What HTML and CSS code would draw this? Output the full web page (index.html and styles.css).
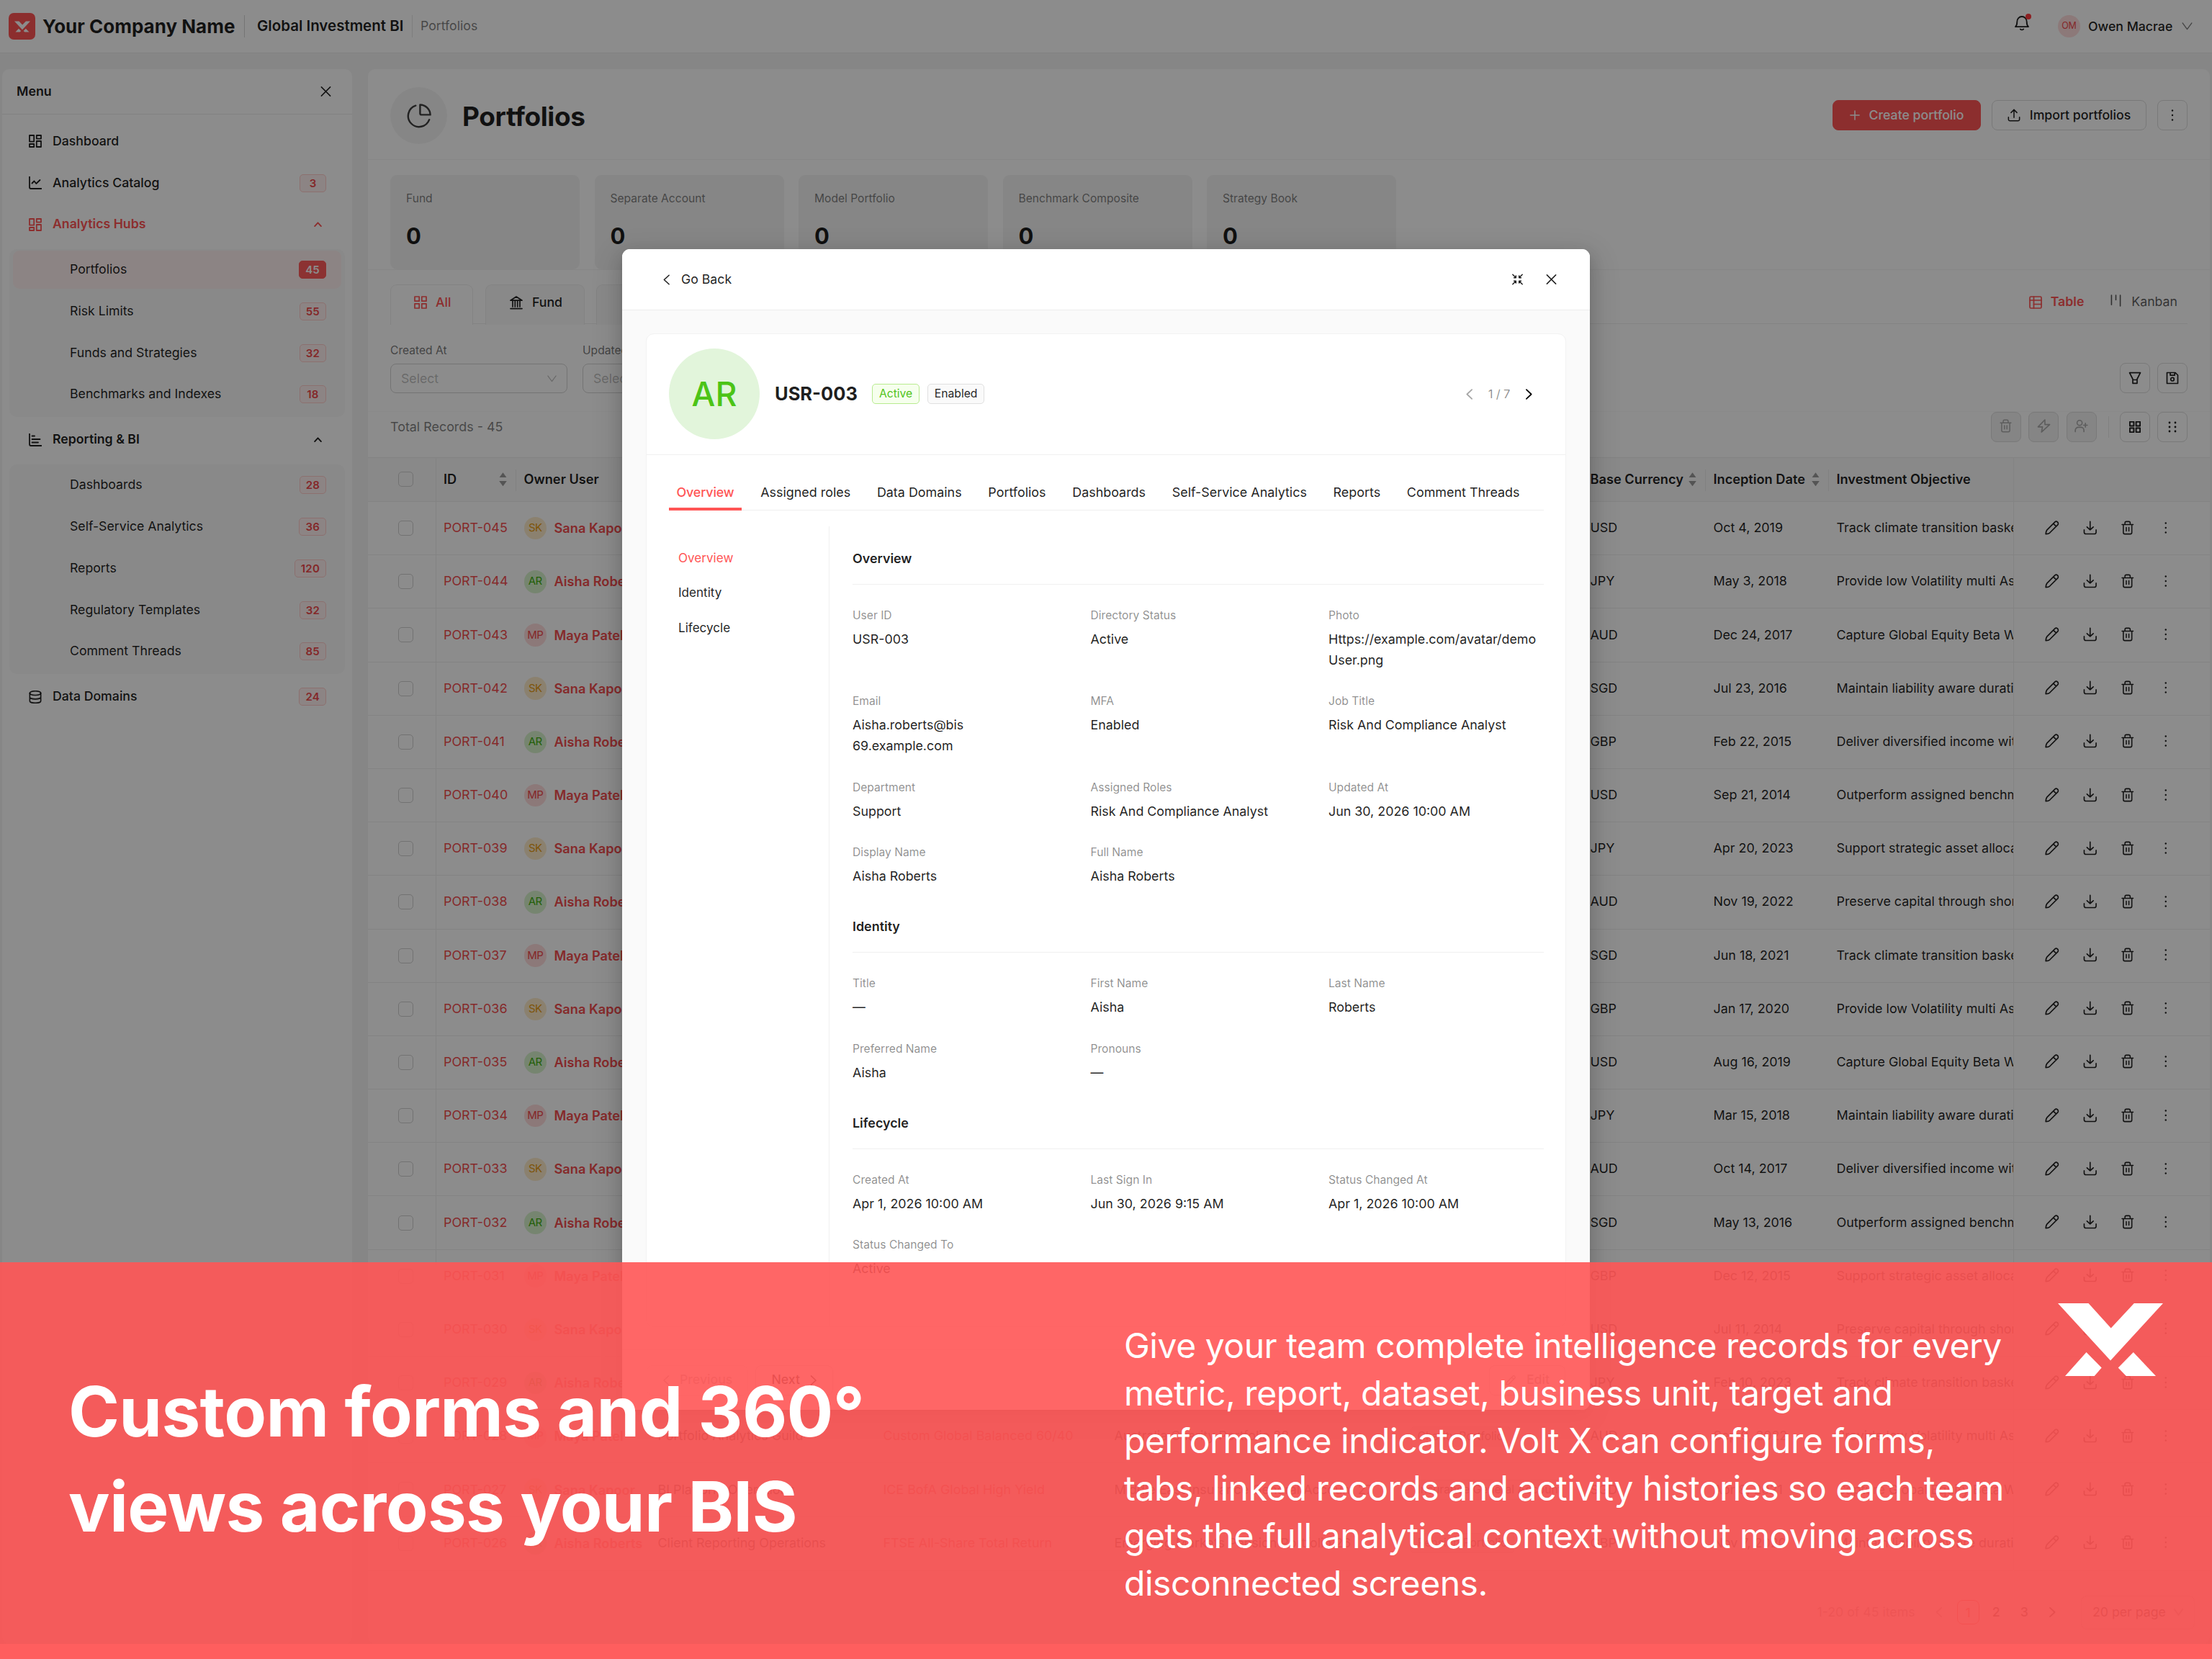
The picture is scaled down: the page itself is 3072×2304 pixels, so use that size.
FILE: index.html
```html
<!DOCTYPE html>
<html lang="en">
<head>
<meta charset="utf-8">
<title>Portfolios</title>
<link rel="stylesheet" href="styles.css">
</head>
<body>
<svg class="defs" aria-hidden="true">
  <symbol id="i-dash" viewBox="0 0 18 18"><path d="M1 1h6.200v8.600H1zM10.800 1H17v4.600H10.800zM1 13h6.200v4H1zM10.800 9H17v8H10.800z"/></symbol>
  <symbol id="i-line" viewBox="0 0 18 18"><path d="M1 .5v14.500a2 2 0 0 0 2 2h14.500M4.500 9.500 7.500 6.500l2.800 3.500 5.200-5"/></symbol>
  <symbol id="i-bars" viewBox="0 0 18 18"><path d="M1 .5v14.500a2 2 0 0 0 2 2h14.500M4.500 3.500h3.500M4.500 8h11M4.500 12.500h8.500"/></symbol>
  <symbol id="i-db" viewBox="0 0 18 20"><ellipse cx="9" cy="4" rx="8.500" ry="3.200"/><path d="M.5 4v12c0 1.800 3.800 3.200 8.500 3.200s8.500-1.400 8.500-3.200V4M.5 10c0 1.800 3.800 3.200 8.500 3.200s8.500-1.400 8.500-3.200"/></symbol>
  <symbol id="i-x" viewBox="0 0 16 16"><path d="m1 1 14 14M15 1 1 15"/></symbol>
  <symbol id="i-grid" viewBox="0 0 18 18"><path d="M1 1h6.200v6.200H1zM10.800 1H17v6.200h-6.200zM1 10.800h6.200V17H1zM10.800 10.800H17V17h-6.200z"/></symbol>
  <symbol id="i-bank" viewBox="0 0 20 20"><path d="M2 7.200 10 2l8 5.200zM2 18.600h16M5 8v8M8.300 8v8M11.700 8v8M15 8v8"/></symbol>
  <symbol id="i-down" viewBox="0 0 16 12"><path d="m1 1 7 9.500L15 1"/></symbol>
  <symbol id="i-up" viewBox="0 0 12 8"><path d="m1 7 5-5.500L11 7"/></symbol>
  <symbol id="i-left" viewBox="0 0 10 16"><path d="M9 1 1.500 8 9 15"/></symbol>
  <symbol id="i-right" viewBox="0 0 10 16"><path d="m1 1 7.500 7L1 15"/></symbol>
  <symbol id="i-pencil" viewBox="0 0 20 20"><path d="M1.200 18.800c.2-2.700.6-4.400 1.600-5.600L14 2a2.800 2.800 0 0 1 4 4L6.800 17.200c-1.200 1-2.900 1.400-5.600 1.600zM12.200 4.200l3.600 3.600"/></symbol>
  <symbol id="i-load" viewBox="0 0 20 20"><path d="M10 1v12M5.500 8.800 10 13l4.500-4.200M1.500 13v3.500A2.200 2.200 0 0 0 3.700 18.700h12.600a2.200 2.200 0 0 0 2.200-2.200V13"/></symbol>
  <symbol id="i-send" viewBox="0 0 20 20"><path d="M10 13.500V1.500M5.500 6 10 1.500 14.500 6M1.500 13v3.500A2.200 2.200 0 0 0 3.700 18.700h12.600a2.200 2.200 0 0 0 2.200-2.200V13"/></symbol>
  <symbol id="i-trash" viewBox="0 0 20 22"><path d="M1.500 6h17M6 6V3.500A2 2 0 0 1 8 1.500h4a2 2 0 0 1 2 2V6M3.500 6v12.200A2.300 2.300 0 0 0 5.800 20.500h8.400a2.300 2.300 0 0 0 2.300-2.300V6M8 10.500v5.500M12 10.500v5.500"/></symbol>
  <symbol id="i-dots" viewBox="0 0 4 18"><g class="solid"><circle cx="2" cy="2.500" r="1.200"/><circle cx="2" cy="9" r="1.200"/><circle cx="2" cy="15.500" r="1.200"/></g></symbol>
  <symbol id="i-dots6" viewBox="0 0 12 18"><g class="solid"><circle cx="2" cy="3" r="1.400"/><circle cx="2" cy="9" r="1.400"/><circle cx="2" cy="15" r="1.400"/><circle cx="10" cy="3" r="1.400"/><circle cx="10" cy="9" r="1.400"/><circle cx="10" cy="15" r="1.400"/></g></symbol>
  <symbol id="i-filter" viewBox="0 0 18 18"><path d="M1.500 1.700h15L12 10.500V16.300H6V10.500zM6 11.500h6"/></symbol>
  <symbol id="i-save" viewBox="0 0 18 18"><path d="M1.500 1.500h11.500l3.500 3.500v11.500h-15zM6 1.500v3.600h6.200V1.500"/><circle cx="9" cy="10.700" r="2.300"/></symbol>
  <symbol id="i-bolt" viewBox="0 0 20 20"><path d="M11.500 1 1.500 11.500h6.500L6.500 19 18.500 8h-7z"/></symbol>
  <symbol id="i-useradd" viewBox="0 0 20 20"><circle cx="7.500" cy="5.500" r="3.700"/><path d="M1.200 18.500v-2a4.500 4.500 0 0 1 4.500-4.500h3.600a4.500 4.500 0 0 1 4.500 4.500v2M16 6.200v5.600M13.200 9h5.600"/></symbol>
  <symbol id="i-table" viewBox="0 0 18 18"><rect x="1" y="1" width="16" height="16" rx="1.500"/><path d="M1 6h16M6.500 1v16"/><path d="M6.500 11.500h10.500"/></symbol>
  <symbol id="i-kanban" viewBox="0 0 16 18"><path d="M1.500 1v14M8 1v7M14.500 1v16"/></symbol>
  <symbol id="i-bell" viewBox="0 0 22 24"><path d="M2 17.200c1.600-1.500 2.300-3.200 2.300-7 0-4 2.800-7.200 6.700-7.200s6.700 3.200 6.700 7.200c0 3.800.7 5.500 2.300 7zM8.800 20.500c1 1.200 3.400 1.200 4.400 0"/></symbol>
  <symbol id="i-pie" viewBox="0 0 36 36"><path d="M13 2.800A16 16 0 1 0 33 23.500"/><path d="M19.500 1.500v12.800a2 2 0 0 0 2 2h13A15.200 15.200 0 0 0 19.500 1.500z"/></symbol>
  <symbol id="i-shrink" viewBox="0 0 18 18"><path d="M1.500 1.500 6.500 6.500M3.500 6.500h3v-3M16.500 1.500l-5 5M14.500 6.500h-3v-3M1.500 16.500l5-5M3.500 11.500h3v3M16.500 16.500l-5-5M14.500 11.500h-3v3"/></symbol>
  <symbol id="i-plus" viewBox="0 0 16 16"><path d="M8 1v14M1 8h14"/></symbol>
  <symbol id="i-brand" viewBox="0 0 146 101"><g class="solid"><path d="M0 0h42.500l31.200 34.500L105.800 0H146L73 79.500z"/><path d="M39.500 68 60.700 89.500 50.700 101H10z"/><path d="M104.800 68 136 101H94.800L83.700 89.500z"/></g></symbol>
</svg>

<div class="app">
  <header class="topbar">
    <span class="logo"><svg class="ic"><use href="#i-brand"/></svg></span>
    <span class="company">Your Company Name</span>
    <i class="bar"></i>
    <span class="product">Global Investment BI</span>
    <i class="bar thin"></i>
    <span class="crumb">Portfolios</span>
    <span class="bell"><svg class="ic"><use href="#i-bell"/></svg></span>
    <span class="avatar mp me">OM</span>
    <span class="user">Owen Macrae</span>
    <svg class="ic user-caret"><use href="#i-down"/></svg>
  </header>

  <div class="columns">
    <nav class="sidebar">
      <div class="side-head"><b>Menu</b><svg class="ic"><use href="#i-x"/></svg></div>
      <div class="menu">
        <div class="item"><svg class="ic"><use href="#i-dash"/></svg>Dashboard</div>
        <div class="item"><svg class="ic"><use href="#i-line"/></svg>Analytics Catalog<em>3</em></div>
        <div class="item open red"><svg class="ic"><use href="#i-dash"/></svg>Analytics Hubs<svg class="ic caret"><use href="#i-up"/></svg></div>
        <div class="sub">
          <div class="item active">Portfolios<em>45</em></div>
          <div class="item">Risk Limits<em>55</em></div>
          <div class="item">Funds and Strategies<em>32</em></div>
          <div class="item">Benchmarks and Indexes<em>18</em></div>
        </div>
        <div class="item open"><svg class="ic"><use href="#i-bars"/></svg>Reporting &amp; BI<svg class="ic caret"><use href="#i-up"/></svg></div>
        <div class="sub">
          <div class="item">Dashboards<em>28</em></div>
          <div class="item">Self-Service Analytics<em>36</em></div>
          <div class="item">Reports<em>120</em></div>
          <div class="item">Regulatory Templates<em>32</em></div>
          <div class="item">Comment Threads<em>85</em></div>
        </div>
        <div class="item"><svg class="ic"><use href="#i-db"/></svg>Data Domains<em>24</em></div>
      </div>
    </nav>

    <main class="panel">
      <div class="page-head">
        <span class="page-icon"><svg class="ic"><use href="#i-pie"/></svg></span>
        <h1>Portfolios</h1>
        <span class="btn primary"><svg class="ic"><use href="#i-plus"/></svg>Create portfolio</span>
        <span class="btn import"><svg class="ic"><use href="#i-send"/></svg>Import portfolios</span>
        <span class="btn square"><svg class="ic dots"><use href="#i-dots"/></svg></span>
      </div>
      <div class="stats">
        <div class="stat"><span>Fund</span><b>0</b></div>
        <div class="stat"><span>Separate Account</span><b>0</b></div>
        <div class="stat"><span>Model Portfolio</span><b>0</b></div>
        <div class="stat"><span>Benchmark Composite</span><b>0</b></div>
        <div class="stat"><span>Strategy Book</span><b>0</b></div>
      </div>
      <div class="tabs">
        <div class="tab on"><svg class="ic"><use href="#i-grid"/></svg>All</div>
        <div class="tab"><svg class="ic bank"><use href="#i-bank"/></svg>Fund</div>
        <div class="tab cut"></div>
        <div class="views"><span class="red"><svg class="ic"><use href="#i-table"/></svg>Table</span><span class="kanban"><svg class="ic"><use href="#i-kanban"/></svg>Kanban</span></div>
      </div>
      <div class="filters">
        <label>Created At<span class="select">Select<svg class="ic"><use href="#i-down"/></svg></span></label>
        <label>Updated At<span class="select">Select<svg class="ic"><use href="#i-down"/></svg></span></label>
        <span class="btn square push"><svg class="ic"><use href="#i-filter"/></svg></span>
        <span class="btn square"><svg class="ic"><use href="#i-save"/></svg></span>
      </div>
      <div class="records">
        <span>Total Records - 45</span>
        <span class="btn square off push"><svg class="ic tall"><use href="#i-trash"/></svg></span>
        <span class="btn square off"><svg class="ic"><use href="#i-bolt"/></svg></span>
        <span class="btn square off"><svg class="ic"><use href="#i-useradd"/></svg></span>
        <i></i>
        <span class="btn square"><svg class="ic small"><use href="#i-grid"/></svg></span>
        <span class="btn square"><svg class="ic six"><use href="#i-dots6"/></svg></span>
      </div>
      <div class="table" id="table">
        <div class="row head">
          <div class="check"><i></i></div>
          <div>ID<s></s></div><div>Owner User</div><div>Team</div><div>Benchmark</div><div>Name</div><div>Type</div>
          <div>Base Currency<s></s></div><div>Inception Date<s></s></div><div>Investment Objective</div><div class="acts"></div>
        </div>
      </div>
      <div class="pager">
        <span class="count">1-20 of 45 items</span>
        <svg class="ic faint"><use href="#i-left"/></svg>
        <span class="num on">1</span><span class="num">2</span><span class="num">3</span>
        <svg class="ic"><use href="#i-right"/></svg>
        <span class="size">20 per page<svg class="ic"><use href="#i-down"/></svg></span>
      </div>
    </main>
  </div>
</div>

<div class="mask"></div>

<section class="modal">
  <div class="modal-head">
    <svg class="ic back"><use href="#i-left"/></svg><span>Go Back</span>
    <svg class="ic shrink"><use href="#i-shrink"/></svg><svg class="ic close"><use href="#i-x"/></svg>
  </div>
  <div class="modal-body">
    <div class="card">
      <div class="who">
        <span class="big">AR</span>
        <h2>USR-003</h2>
        <span class="tag ok">Active</span><span class="tag">Enabled</span>
        <div class="step"><svg class="ic faint"><use href="#i-left"/></svg><span>1 / 7</span><svg class="ic"><use href="#i-right"/></svg></div>
      </div>
      <div class="card-tabs">
        <span class="on">Overview</span><span>Assigned roles</span><span>Data Domains</span><span>Portfolios</span><span>Dashboards</span><span>Self-Service Analytics</span><span>Reports</span><span>Comment Threads</span>
      </div>
      <div class="detail">
        <div class="anchors"><span class="red">Overview</span><span>Identity</span><span>Lifecycle</span></div>
        <div class="sections">
          <h3>Overview</h3>
          <dl>
            <div><dt>User ID</dt><dd>USR-003</dd></div>
            <div><dt>Directory Status</dt><dd>Active</dd></div>
            <div><dt>Photo</dt><dd>Https://example.com/avatar/demo<br>User.png</dd></div>
            <div><dt>Email</dt><dd>Aisha.roberts@bis<br>69.example.com</dd></div>
            <div><dt>MFA</dt><dd>Enabled</dd></div>
            <div><dt>Job Title</dt><dd>Risk And Compliance Analyst</dd></div>
            <div><dt>Department</dt><dd>Support</dd></div>
            <div><dt>Assigned Roles</dt><dd>Risk And Compliance Analyst</dd></div>
            <div><dt>Updated At</dt><dd>Jun 30, 2026 10:00 AM</dd></div>
            <div><dt>Display Name</dt><dd>Aisha Roberts</dd></div>
            <div><dt>Full Name</dt><dd>Aisha Roberts</dd></div>
          </dl>
          <h3>Identity</h3>
          <dl>
            <div><dt>Title</dt><dd>—</dd></div>
            <div><dt>First Name</dt><dd>Aisha</dd></div>
            <div><dt>Last Name</dt><dd>Roberts</dd></div>
            <div><dt>Preferred Name</dt><dd>Aisha</dd></div>
            <div><dt>Pronouns</dt><dd>—</dd></div>
          </dl>
          <h3>Lifecycle</h3>
          <dl>
            <div><dt>Created At</dt><dd>Apr 1, 2026 10:00 AM</dd></div>
            <div><dt>Last Sign In</dt><dd>Jun 30, 2026 9:15 AM</dd></div>
            <div><dt>Status Changed At</dt><dd>Apr 1, 2026 10:00 AM</dd></div>
            <div><dt>Status Changed To</dt><dd>Active</dd></div>
          </dl>
        </div>
      </div>
    </div>
  </div>
  <div class="modal-foot">
    <span class="btn faint"><svg class="ic"><use href="#i-left"/></svg>Previous</span>
    <span class="btn">Next<svg class="ic"><use href="#i-right"/></svg></span>
    <span class="btn push edit"><svg class="ic"><use href="#i-pencil"/></svg>Edit</span>
  </div>
</section>

<section class="banner">
  <h4>Custom forms and 360°<br>views across your BIS</h4>
  <p>Give your team complete intelligence records for every<br>metric, report, dataset, business unit, target and<br>performance indicator. Volt X can configure forms,<br>tabs, linked records and activity histories so each team<br>gets the full analytical context without moving across<br>disconnected screens.</p>
  <svg class="ic"><use href="#i-brand"/></svg>
</section>
<script src="rows.js"></script>
</body>
</html>
```
FILE: styles.css
```css
* { box-sizing: border-box; }
body { margin: 0; width: 3072px; height: 2304px; overflow: hidden; position: relative; font: 400 17.7px/28.9px Inter, sans-serif; color: rgba(0,0,0,.88); background: #ffb0ae; }
h1, h2, h3, h4, p, dl, dd { margin: 0; }
.defs { position: absolute; width: 0; height: 0; }
.ic { display: block; flex: none; width: 18px; height: 18px; fill: none; stroke: currentColor; stroke-width: 1.7; stroke-linecap: round; stroke-linejoin: round; overflow: visible; }
.solid { fill: currentColor; stroke: none; }
.red { color: #ff5555; }
.push { margin-left: auto; }

.app { height: 2283px; background: #f5f5f5; }
.topbar { height: 74px; background: #fff; border-bottom: 1px solid #ececec; display: flex; align-items: center; padding: 0 27px 0 12px; }
.logo { width: 37px; height: 37px; border-radius: 7px; background: #ff5555; color: #fff; display: flex; align-items: center; justify-content: center; margin-right: 10px; }
.logo .ic { width: 22px; height: 16px; }
.company { font-size: 26px; font-weight: 650; width: 280px; white-space: nowrap; padding-top: 1px; }
.bar { width: 1px; height: 31px; background: #d5d5d5; margin-right: 17px; }
.bar.thin { margin-right: 11px; background: #e4e4e4; }
.product { font-size: 20.500px; font-weight: 620; width: 215px; white-space: nowrap; }
.crumb { color: rgba(0,0,0,.5); }
.bell { margin-left: auto; position: relative; margin-top: -9px; }
.bell .ic { width: 22px; height: 24px; stroke-width: 1.8; }
.bell::after { content: ""; position: absolute; right: -2px; top: -1px; width: 8px; height: 8px; border-radius: 50%; background: #ff3b3f; }
.avatar { width: 31.5px; height: 31.5px; border-radius: 50%; display: inline-flex; align-items: center; justify-content: center; font-size: 15px; flex: none; letter-spacing: -.5px; }
.me { margin: 0 11px 0 39px; font-size: 12.5px; letter-spacing: -.3px; }
.user { font-weight: 500; width: 130px; padding-top: 1px; }
.user-caret { width: 15px; height: 11px; opacity: .6; stroke-width: 1.4; }
.sk { background: #fdeccb; color: #e79a10; }
.ar { background: #d8f2cc; color: #3fae12; }
.mp { background: #ffdcdc; color: #f0484b; }

.columns { display: flex; gap: 22px; padding: 22px 3px 0; height: 2209px; }
.sidebar { width: 486px; background: #fff; border-radius: 10px; }
.side-head { height: 63px; border-bottom: 1px solid #ececec; display: flex; align-items: center; justify-content: space-between; padding: 0 29px 0 20px; }
.side-head b { font-weight: 600; font-size: 17.8px; }
.side-head .ic { width: 15px; height: 14px; }
.menu { padding: 11px 10px 0; display: flex; flex-direction: column; gap: 5.250px; }
.item { height: 52.500px; display: flex; align-items: center; padding: 0 28px 0 27px; font-weight: 500; }
.item > .ic:first-child { margin-right: 15px; stroke-width: 1.8; }
.item.open { font-weight: 600; }
.item.red { font-weight: 570; }
.item .caret { width: 11px; height: 7px; margin-left: auto; margin-right: 4px; stroke-width: 2.1; }
.item em { margin-left: auto; font: 600 15px/23px Inter, sans-serif; border: 1px solid #ffccca; background: #fff1f0; color: #f0484b; border-radius: 5px; min-width: 37px; text-align: center; letter-spacing: .2px; margin-right: -2px; padding: 0 8px; }
.sub { background: #fafafa; border-radius: 10px; margin-top: 2.600px; padding: 2.600px 5px 5.250px; display: flex; flex-direction: column; gap: 5.250px; }
.sub .item { font-weight: 400; padding: 0 21px 0 79px; border-radius: 9px; }
.sub .item em { margin-right: 0; }
.sub .active { background: #fff1f0; }
.sub .active em { background: #ff5c5c; border-color: #ff5c5c; color: #fff; }

.panel { width: 2558px; background: #fff; border-radius: 10px; overflow: hidden; }
.page-head { height: 126px; border-bottom: 1px solid #f5f5f5; display: flex; align-items: center; padding: 4px 31px 0 31px; }
.page-icon { width: 79px; height: 79px; border-radius: 50%; background: #f5f5f5; display: flex; align-items: center; justify-content: center; margin-right: 21px; }
.page-icon .ic { width: 34px; height: 34px; stroke-width: 2.6; color: rgba(0,0,0,.75); }
h1 { font-size: 37px; font-weight: 680; letter-spacing: -.4px; line-height: 44px; margin: 2px auto 0 0; }
.btn { height: 42px; border: 1.300px solid #dcdcdc; border-radius: 8px; display: inline-flex; align-items: center; justify-content: center; gap: 13px; font-weight: 500; flex: none; background: #fff; }
.page-head .btn { margin-top: -1px; }
.primary { width: 206px; background: #ff5555; border-color: #ff5555; color: #fff; margin-right: 15px; }
.primary .ic { width: 14px; height: 14px; }
.import { width: 215px; margin-right: 15px; }
.square { width: 42px; color: rgba(0,0,0,.88); }
.square .dots { width: 4px; height: 18px; }
.stats { height: 152.500px; border-bottom: 1px solid #f5f5f5; padding: 21px 31px 0; display: flex; gap: 20.500px; }
.stat { width: 263px; height: 131px; background: #f5f5f5; border-radius: 9px; padding: 20px 21px 0 22px; display: flex; flex-direction: column; }
.stat span { font-size: 15.600px; color: rgba(0,0,0,.5); line-height: 26px; }
.stat b { font-weight: 650; font-size: 31px; line-height: 40px; margin-top: 19px; }
.tabs { margin: 0 31px; padding-top: 20px; height: 75.500px; border-bottom: 1px solid #efefef; display: flex; gap: 16.500px; }
.tab { height: 56px; border: 1px solid #efefef; border-bottom: 0; background: #fafafa; border-radius: 9px 9px 0 0; display: flex; align-items: center; gap: 12px; padding: 0 32px 6px; font-weight: 500; }
.tab:nth-child(2) { width: 138px; gap: 13px; }
.tab.cut { width: 240px; }
.tab.on { background: #fff; color: #ff5555; padding-right: 30px; }
.tab .bank { width: 20px; height: 20px; margin-right: -1px; }
.views { margin-left: auto; display: flex; align-items: center; gap: 37px; padding: 0 14px 6px 0; font-weight: 600; height: 56px; }
.views span { display: flex; align-items: center; gap: 12px; }
.kanban { font-weight: 400; color: rgba(0,0,0,.65); }
.kanban .ic { width: 15px; height: 17px; margin-top: -5px; margin-right: 2px; }
.filters { height: 122px; border-bottom: 1px solid #fafafa; display: flex; padding: 23px 31px 25px 31px; gap: 21.500px; align-items: flex-end; }
label { font-size: 15.600px; line-height: 26px; color: rgba(0,0,0,.55); display: block; }
.select { display: flex; margin-top: 5px; width: 245.500px; height: 41px; border: 1px solid #d4d4d4; border-radius: 8px; align-items: center; justify-content: space-between; padding: 0 14px; font-size: 17.700px; color: rgba(0,0,0,.27); }
.select .ic { width: 13px; height: 10px; stroke-width: 1.300; }
.filters .btn { gap: 0; margin-top: 6px; }
.filters .btn + .btn { margin-left: -11px; }
.records { height: 62.500px; display: flex; align-items: flex-start; padding: 0 31px 0 31px; gap: 10.500px; color: rgba(0,0,0,.5); line-height: 42px; font-size: 17.900px; }
.records i { width: 1px; height: 30px; margin: 6px 4px 0 6px; background: #ececec; }
.off { background: #f2f2f2; color: rgba(0,0,0,.3); }
.off .ic { width: 19px; height: 19px; margin-top: -4px; }
.small { width: 16px; height: 16px; stroke-width: 2.200; }
.six { width: 12px; height: 18px; }

.table { border-top: 1px solid #efefef; }
.row { display: grid; grid-template-columns: 94.500px 111.500px 186px 313px 321px 411px 250px 171px 171px 256px 273px; height: 74.200px; border-bottom: 1px solid #efefef; }
.row > div { display: flex; align-items: center; padding: 0 10.500px; white-space: nowrap; overflow: hidden; font-size: 17.900px; }
.row.head { height: 61.500px; background: #fafafa; font-weight: 600; }
.row.head > div { position: relative; font-size: 18.200px; justify-content: space-between; padding-right: 13px; }
.row.head > div:nth-child(n+2):nth-child(-n+9)::after { content: ""; position: absolute; right: 0; top: 16px; height: 30px; width: 1px; background: #ececec; }
s { width: 11px; height: 19px; background: linear-gradient(#999, #999) 0 0/100% 7.500px no-repeat, linear-gradient(#999, #999) 0 100%/100% 7.500px no-repeat; clip-path: polygon(50% 0, 100% 40%, 100% 60%, 50% 100%, 0 60%, 0 40%); }
.row > .check { border-right: 1px solid #efefef; padding-left: 41.500px; }
.check i { width: 21px; height: 21px; border: 1.300px solid #cfcfcf; border-radius: 5px; }
.row > .owner { color: #f34d4f; font-weight: 600; gap: 10.500px; overflow: visible; font-size: 18.200px; }
.owner .avatar { font-weight: 400; }
.id { color: #f34d4f; }
.type span { background: #f5f5f5; border: 1px solid #ddd; border-radius: 5px; padding: 0 9px; font-size: 15.600px; line-height: 26px; }
.row > .acts { border-left: 1px solid #efefef; padding: 0 52px 2px 43px; justify-content: space-between; }
.acts .ic, .acts .dots { width: 19.500px; height: 20px; }
.acts .dots { height: 18px; }
.row > div.obj { padding-right: 0; }

.pager { height: 91px; margin-top: 13px; display: flex; align-items: center; justify-content: flex-end; padding-right: 21px; }
.pager .ic { width: 9px; height: 14px; stroke-width: 2; }
.faint { opacity: .35; }
.count { color: rgba(0,0,0,.45); margin-right: 28px; }
.num { width: 31.500px; height: 34px; line-height: 33px; text-align: center; margin-right: 7.500px; font-weight: 500; }
.num.on { color: #ff5555; border: 1px solid #ff5555; border-radius: 8px; margin-left: 21px; }
.num:nth-of-type(4) { margin-right: 19px; }
.size { width: 158px; height: 47px; margin-left: 35px; border: 1px solid #ddd; border-radius: 8px; display: flex; align-items: center; justify-content: space-between; padding: 0 15px; }
.size .ic { width: 13px; height: 10px; opacity: .4; }

.mask { position: absolute; inset: 0 0 21px; background: rgba(0,0,0,.45); }

.modal { position: absolute; left: 864px; top: 345.500px; width: 1344px; height: 1612.500px; background: #fafafa; border-radius: 11px; overflow: visible; box-shadow: 0 8px 21px rgba(0,0,0,.14), 0 4px 8px -5px rgba(0,0,0,.2), 0 12px 37px 10px rgba(0,0,0,.1); display: flex; flex-direction: column; }
.modal-head { height: 85px; background: #fff; border-bottom: 1px solid #ececec; border-radius: 11px 11px 0 0; display: flex; align-items: center; padding: 1px 46px 0 57px; }
.back { width: 9px; height: 15px; margin-right: 16px; }
.shrink { width: 17px; height: 16px; margin-left: auto; margin-right: 31px; }
.close { width: 15px; height: 14px; }
.modal-body { flex: 1; padding: 32px 33px 31px; }
.card { height: 1380px; background: #fff; border: 1px solid #f2f2f2; border-radius: 11px; }
.who { height: 168px; border-bottom: 1px solid #f0f0f0; display: flex; align-items: center; padding: 0 46px 0 31px; }
.big { width: 126px; height: 126px; border-radius: 50%; background: #e2f5db; color: #4cc417; font-size: 46.300px; font-weight: 450; display: flex; align-items: center; justify-content: center; margin-right: 21px; }
h2 { font-size: 25.500px; font-weight: 650; margin-right: 20px; }
.tag { font-size: 15.700px; line-height: 26px; height: 28px; border: 1px solid #e0e0e0; border-radius: 5px; background: #fafafa; padding: 0 9px; margin-right: 10.500px; }
.ok { background: #f6ffed; border-color: #b7eb8f; color: #52c41a; }
.step { margin-left: auto; display: flex; align-items: center; color: rgba(0,0,0,.45); width: 92px; justify-content: space-between; font-size: 16.500px; letter-spacing: -.2px; }
.step .ic { width: 9px; height: 15px; stroke: #000; stroke-width: 1.900; }
.card-tabs { margin: 32px 30px 0 31px; height: 45px; border-bottom: 1px solid #efefef; display: flex; gap: 15.750px; font-size: 17.900px; }
.card-tabs span { padding: 6px 10.500px 0; height: 45.500px; white-space: nowrap; }
.card-tabs .on { color: #ff5555; border-bottom: 4px solid #ff5555; font-weight: 450; letter-spacing: -.15px; }
.detail { display: flex; margin: 22px 30px 0 31px; height: 1112px; }
.anchors { width: 224px; border-right: 1px solid #f0f0f0; padding: 29px 13px; display: flex; flex-direction: column; gap: 19.500px; font-size: 17.100px; }
.anchors span { line-height: 29px; }
.sections { padding: 31px 0 0 32px; flex: 1; }
h3 { font-size: 17.900px; font-weight: 600; line-height: 28.900px; padding-bottom: 20.500px; border-bottom: 1px solid #f0f0f0; margin-bottom: 31px; }
dl { display: grid; grid-template-columns: repeat(3, 330.500px); row-gap: 30.800px; margin-bottom: 41px; width: 960px; }
dt { font-size: 15.600px; line-height: 24.700px; color: rgba(0,0,0,.45); margin-bottom: 6.100px; }
dd { white-space: nowrap; font-size: 17.850px; }
.modal-foot { height: 84px; border-top: 1px solid #f0f0f0; background: #fff; border-radius: 0 0 11px 11px; display: flex; align-items: center; padding: 0 34px; gap: 10px; }
.modal-foot .btn { padding: 0 21px; font-weight: 500; gap: 14px; }
.modal-foot .ic { width: 10px; height: 14px; }
.modal-foot .edit { color: rgba(0,0,0,.4); }
.edit .ic { width: 16px; }

.banner { position: absolute; left: 0; top: 1753px; width: 3072px; height: 551px; background: rgba(255,85,85,.9); color: #fff; display: flex; align-items: flex-start; }
.banner h4 { font-size: 96px; line-height: 132px; font-weight: 700; letter-spacing: -.65px; width: 1466px; padding: 141px 0 0 95px; white-space: nowrap; }
.banner p { font-size: 48px; line-height: 66px; letter-spacing: -.45px; width: 1296px; padding: 83px 0 0 95px; white-space: nowrap; }
.banner .ic { width: 146px; height: 101px; margin: 57px 0 0 96px; }
```
FILE: rows.js
```
// Rows of the portfolio table, newest record first.
const dates = ['Oct 4, 2019', 'May 3, 2018', 'Dec 24, 2017', 'Jul 23, 2016', 'Feb 22, 2015', 'Sep 21, 2014', 'Apr 20, 2023', 'Nov 19, 2022', 'Jun 18, 2021', 'Jan 17, 2020', 'Aug 16, 2019', 'Mar 15, 2018', 'Oct 14, 2017', 'May 13, 2016', 'Dec 12, 2015', 'Jul 11, 2014', 'Feb 10, 2023', 'Sep 9, 2022', 'Apr 8, 2021', 'Nov 7, 2020'];
const owners = [['SK', 'Sana Kapoor'], ['AR', 'Aisha Roberts'], ['MP', 'Maya Patel']];
const currencies = ['USD', 'JPY', 'AUD', 'SGD', 'GBP'];
const objectives = ['Track climate transition baskets', 'Provide low Volatility multi Asset', 'Capture Global Equity Beta With', 'Maintain liability aware duration', 'Deliver diversified income with', 'Outperform assigned benchmark', 'Support strategic asset allocation', 'Preserve capital through short'];
const details = {
  28: ['Portfolio Analytics Guild', 'Custom Global Balanced 60/40', 'Australia Charity Portfolio 28', 'Charity Portfolio'],
  27: ['BI Platform Operations', 'ICE BofA Global High Yield', 'Middle East Insurance General Account 27', 'Insurance General Account'],
  26: ['Client Reporting Operations', 'FTSE All-Share Total Return', 'Emerging Markets Pension Portfolio 26', 'Pension Portfolio']
};
const icon = (id, cls = '') => `<svg class="ic ${cls}"><use href="#i-${id}"/></svg>`;
document.getElementById('table').insertAdjacentHTML('beforeend', dates.map((date, i) => {
  const n = 45 - i;
  const [code, name] = owners[i % 3];
  const [team, bench, title, type] = details[n] || ['', '', '', ''];
  return `<div class="row"><div class="check"><i></i></div><div class="id">PORT-0${n}</div>
    <div class="owner"><span class="avatar ${code.toLowerCase()}">${code}</span>${name}</div>
    <div>${team}</div><div class="id">${bench}</div><div>${title}</div><div class="type">${type ? `<span>${type}</span>` : ''}</div>
    <div>${currencies[i % 5]}</div><div>${date}</div><div class="obj">${objectives[i % 8]}</div>
    <div class="acts">${icon('pencil')}${icon('load')}${icon('trash')}${icon('dots', 'dots')}</div></div>`;
}).join(''));
```
